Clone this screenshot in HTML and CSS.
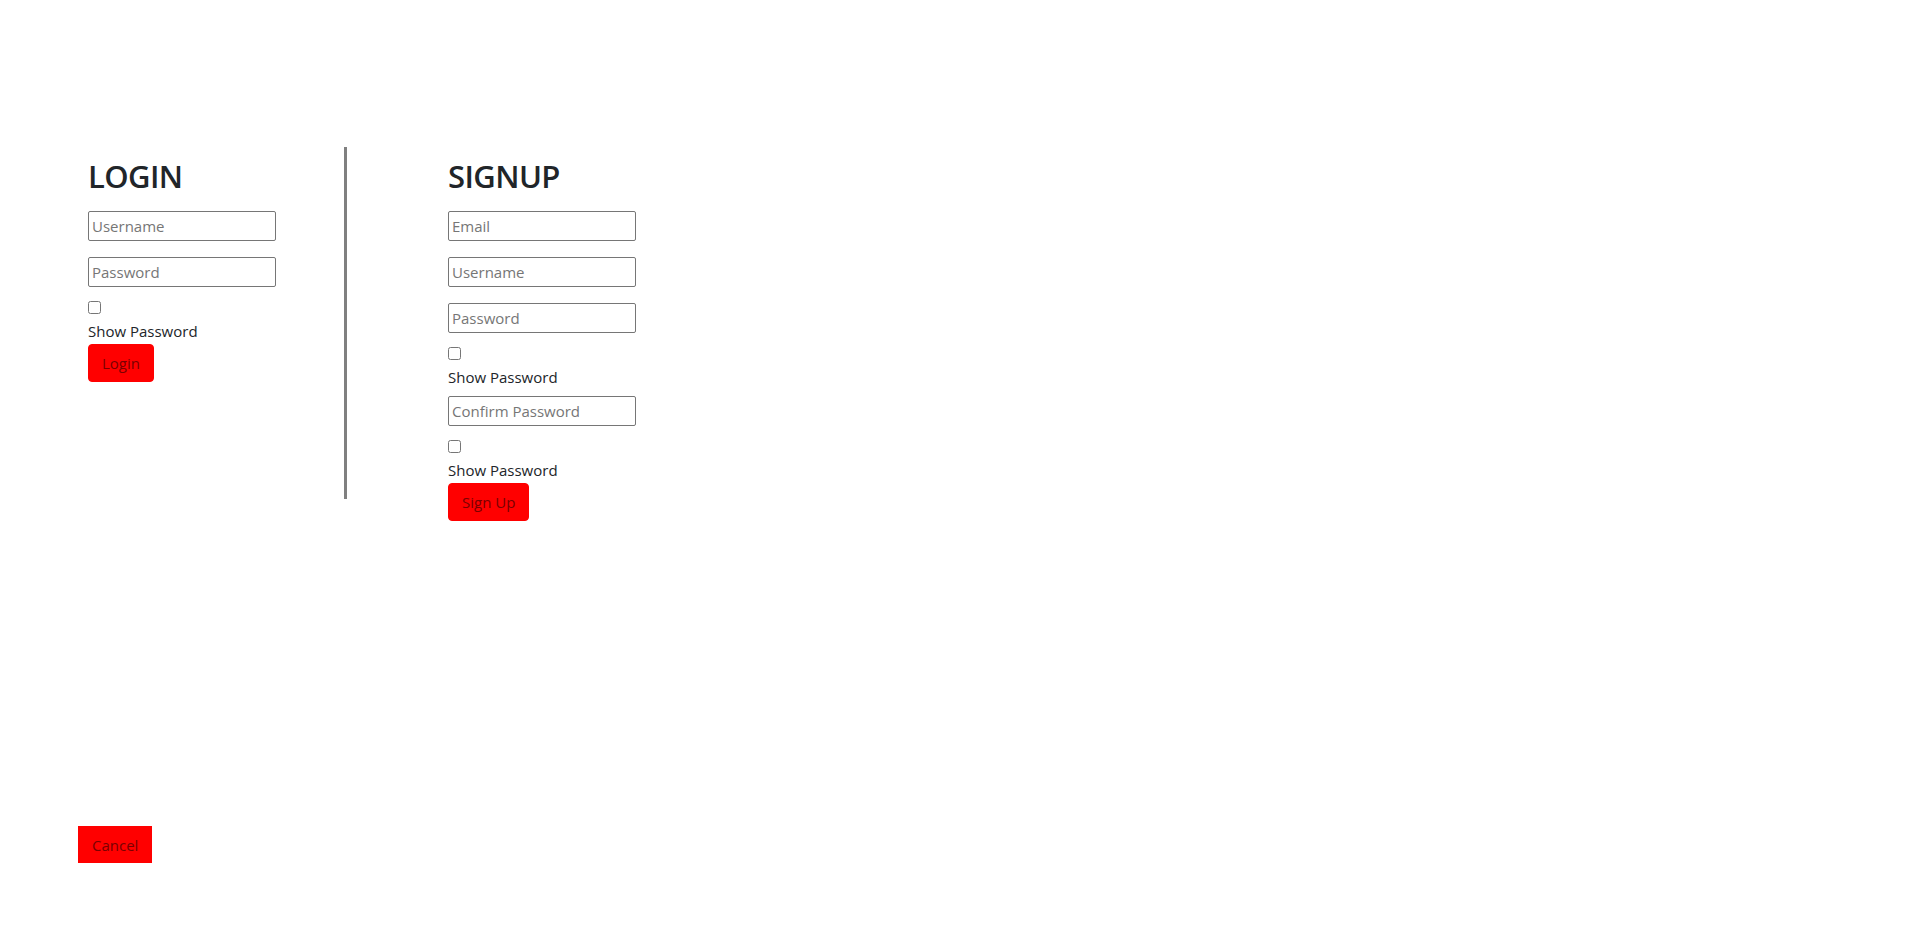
FILE: index.html
```html
<!DOCTYPE html>
<html lang="en">
<head>
<meta charset="utf-8">
<title>Login / Signup</title>
<link rel="stylesheet" href="styles.css">
</head>
<body>
<div class="page">
  <div class="forms">
    <section class="col login">
      <h2 class="title">LOGIN</h2>
      <input class="field" type="text" placeholder="Username">
      <input class="field" type="password" placeholder="Password">
      <div class="check"><input type="checkbox" class="box"></div>
      <div class="label">Show Password</div>
      <button class="btn">Login</button>
    </section>
    <div class="divider"></div>
    <section class="col signup">
      <h2 class="title">SIGNUP</h2>
      <input class="field" type="email" placeholder="Email">
      <input class="field" type="text" placeholder="Username">
      <input class="field" type="password" placeholder="Password">
      <div class="check"><input type="checkbox" class="box"></div>
      <div class="label">Show Password</div>
      <input class="field confirm" type="password" placeholder="Confirm Password">
      <div class="check"><input type="checkbox" class="box"></div>
      <div class="label">Show Password</div>
      <button class="btn">Sign Up</button>
    </section>
  </div>
  <button class="cancel">Cancel</button>
</div>
</body>
</html>
```
FILE: styles.css
```css
html, body {
  margin: 0;
  padding: 0;
  background: #fff;
}
body {
  font-family: "Open Sans", "Noto Sans", sans-serif;
  font-size: 16px;
  line-height: 1.5;
  color: #212529;
}
.page {
  padding: 0 0 0 78px;
}
.forms {
  display: flex;
  align-items: flex-start;
  padding-top: 147px;
}
.col {
  display: flex;
  flex-direction: column;
  align-items: flex-start;
}
.login {
  width: 266px;
  padding-left: 10px;
  box-sizing: border-box;
}
.divider {
  width: 3px;
  height: 352px;
  background: #808080;
  flex: none;
}
.signup {
  padding-left: 101px;
}
.title {
  margin: 10px 0 0 0;
  font-size: 31px;
  font-weight: 600;
  line-height: 38px;
  letter-spacing: -0.6px;
}
.field {
  box-sizing: border-box;
  width: 188px;
  height: 30px;
  margin: 16px 0 0 0;
  padding: 1px 3px;
  border: 1px solid #767676;
  border-radius: 2px;
  font-family: inherit;
  font-size: 15px;
  color: #212529;
}
.field::placeholder {
  color: #767676;
}
.confirm {
  margin-top: 7px;
}
.check {
  height: 13px;
  margin-top: 14px;
  display: flex;
}
.box {
  width: 13px;
  height: 13px;
  margin: 0;
}
.label {
  margin-top: 5px;
  height: 24px;
  line-height: 24px;
  font-size: 15px;
}
.btn {
  margin-top: 1px;
  height: 38px;
  padding: 0 13px;
  border: 1px solid #f00;
  border-radius: 4px;
  background: #f00;
  color: #7a0000;
  font-family: inherit;
  font-size: 15px;
  line-height: 24px;
}
.cancel {
  display: block;
  margin-top: 305px;
  height: 37px;
  padding: 0 14px;
  border: none;
  border-radius: 0;
  background: #f00;
  color: #7a0000;
  font-family: inherit;
  font-size: 15px;
}
```
